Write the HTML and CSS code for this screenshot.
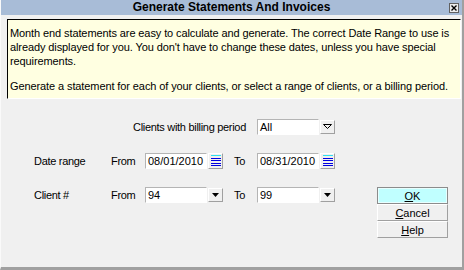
FILE: index.html
```html
<html lang="en">
<head>
    <meta charset="UTF-8">
    <title>Generate Statements And Invoices</title>
<link rel="stylesheet" href="styles.css">
</head>
<body>
    <div class="window">
        <div class="titlebar">
            <span></span>
            <div class="title">Generate Statements And Invoices</div>
            <span class="close">
                <svg width="10" height="10" viewBox="0 0 10 10">
                    <rect x="0.5" y="0.5" width="9" height="9" fill="#ececec" stroke="#606060"/>
                    <path d="M2.5 2.5 L7.5 7.5 M7.5 2.5 L2.5 7.5" stroke="#000" stroke-width="1.4"/>
                </svg>
            </span>
        </div>

        <div class="info">
            <p>Month end statements are easy to calculate and generate. The correct Date Range to use is<br>
            already displayed for you. You don't have to change these dates, unless you have special<br>
            requirements.</p>
            <p>Generate a statement for each of your clients, or select a range of clients, or a billing period.</p>
        </div>

        <div class="form">
            <div class="period-label">Clients with billing period</div>
            <div class="field col-to-input">All</div>
            <span class="btn col-to-btn">
                <svg width="9" height="6" viewBox="0 0 9 6"><polygon points="0.5,0.5 8.5,0.5 4.5,4.5" fill="none" stroke="#000"/></svg>
            </span>

            <div class="label">Date range</div>
            <div class="word">From</div>
            <div class="field">08/01/2010</div>
            <span class="btn cal">
                <svg width="10" height="12" viewBox="0 0 10 12">
                    <rect x="0" y="0" width="10" height="1" fill="#30e0f0"/>
                    <rect x="0" y="3" width="10" height="1" fill="#0000e0"/>
                    <rect x="0" y="5" width="10" height="1" fill="#0000e0"/>
                    <rect x="0" y="8" width="10" height="1" fill="#0000e0"/>
                    <rect x="0" y="10" width="10" height="1" fill="#0000e0"/>
                </svg>
            </span>
            <div class="word col-to">To</div>
            <div class="field">08/31/2010</div>
            <span class="btn cal">
                <svg width="10" height="12" viewBox="0 0 10 12">
                    <rect x="0" y="0" width="10" height="1" fill="#30e0f0"/>
                    <rect x="0" y="3" width="10" height="1" fill="#0000e0"/>
                    <rect x="0" y="5" width="10" height="1" fill="#0000e0"/>
                    <rect x="0" y="8" width="10" height="1" fill="#0000e0"/>
                    <rect x="0" y="10" width="10" height="1" fill="#0000e0"/>
                </svg>
            </span>

            <div class="label">Client #</div>
            <div class="word">From</div>
            <div class="field">94</div>
            <span class="btn">
                <svg width="7" height="4" viewBox="0 0 7 4"><polygon points="0,0 7,0 3.5,4" fill="#000"/></svg>
            </span>
            <div class="word col-to">To</div>
            <div class="field">99</div>
            <span class="btn">
                <svg width="7" height="4" viewBox="0 0 7 4"><polygon points="0,0 7,0 3.5,4" fill="#000"/></svg>
            </span>

            <div class="actions">
                <button class="action ok"><u>O</u>K</button>
                <button class="action"><u>C</u>ancel</button>
                <button class="action"><u>H</u>elp</button>
            </div>
        </div>
    </div>
</body>
</html>
```

FILE: styles.css
```css
*{
    margin: 0;
    padding: 0;
    box-sizing: border-box;
}

body{
    font-family: "Liberation Sans", Arial, sans-serif;
    font-size: 11px;
    color: #000;
}

.window{
    width: 464px;
    height: 270px;
    background: #f0f0f0;
    border-left: 1px solid #fafafa;
    border-right: 2px solid #a0a0a0;
    border-bottom: 3px solid #a0a0a0;
}

/* 标题栏：左右两列等宽，让标题居中 */
.titlebar{
    display: grid;
    grid-template-columns: 1fr auto 1fr;
    align-items: center;
    height: 15px;
    background: #a8bcd7;
}
.title{
    font-weight: bold;
    font-size: 12px;
    line-height: 15px;
}
.close{
    justify-self: end;
    display: flex;
    margin-right: 3px;
}

.info{
    margin: 4px 1px 0 6px;
    padding: 6px 0 5px 2px;
    background: #ffffe1;
    border: 1px solid;
    border-color: #000 #fff #fff #000;
    line-height: 14px;
    letter-spacing: -0.1px;
    white-space: nowrap;
}
.info p + p{
    margin-top: 11px;
}

.form{
    display: grid;
    grid-template-columns: 77px 34px 62px 16px 11px 23px 62px 16px 42px 71px;
    grid-template-rows: 16px 16px 16px;
    row-gap: 18px;
    align-items: center;
    padding: 20px 0 0 33px;
    letter-spacing: -0.3px;
}

.period-label{
    grid-column: 1 / 7;
    text-align: right;
    padding-right: 11px;
}
.label{
    grid-column: 1;
}
.col-to{
    grid-column: 6;
}
.col-to-input{
    grid-column: 7;
}

.field{
    height: 16px;
    line-height: 14px;
    padding-left: 2px;
    background: #fff;
    border: 1px solid;
    border-color: #b4b4b4 #fff #fff #b4b4b4;
    letter-spacing: 0;
}

.btn{
    display: flex;
    align-items: center;
    justify-content: center;
    width: 15px;
    height: 14px;
    margin-left: 1px;
    background: #f0f0f0;
    border: 1px solid;
    border-color: #fff #a0a0a0 #a0a0a0 #fff;
}
.btn.cal{
    height: 16px;
}

.actions{
    grid-column: 10;
    grid-row: 3;
    align-self: start;
    display: flex;
    flex-direction: column;
}
.action{
    height: 17px;
    font-family: inherit;
    font-size: 11px;
    letter-spacing: 0;
    background: #f0f0f0;
    border: 1px solid;
    border-color: #fff #a0a0a0 #a0a0a0 #fff;
}
.action.ok{
    background: #c0ffff;
    border: 1px solid #8c8c8c;
    box-shadow: inset 0 0 0 1px #e8ffff;
}
```
